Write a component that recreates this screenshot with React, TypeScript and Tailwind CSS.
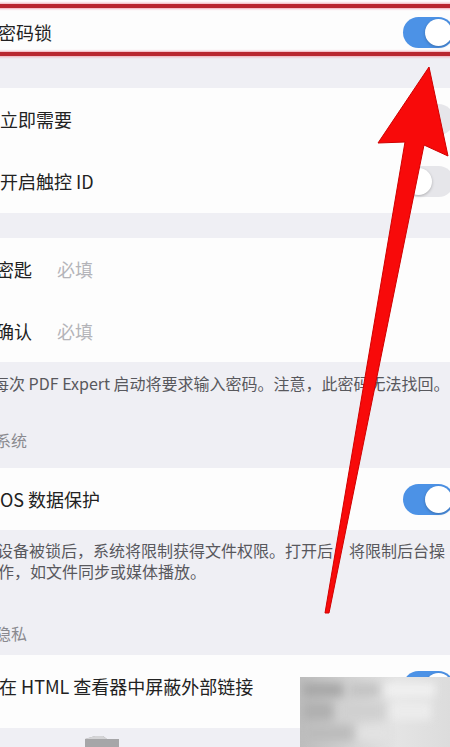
import React from "react";

const Toggle = ({ on }: { on: boolean }) => (
  <div
    className={
      on
        ? "flex h-[31px] w-[51px] shrink-0 items-center justify-end rounded-full bg-[#4c92e6] p-[2px] mr-[-4px]"
        : "flex h-[31px] w-[51px] shrink-0 items-center justify-start rounded-full bg-[#e6e6ea] p-[2px] mr-[-4px]"
    }
  >
    <div className="h-[27px] w-[27px] rounded-full bg-white shadow-[0_1px_3px_rgba(0,0,0,0.25)]" />
  </div>
);

const Row = ({
  children,
  right,
  h = "h-[62px]",
}: {
  children: React.ReactNode;
  right?: React.ReactNode;
  h?: string;
}) => (
  <div className={`flex ${h} items-center justify-between text-[18px] text-[#222]`}>
    <div className="flex items-center whitespace-nowrap">{children}</div>
    {right}
  </div>
);

export default function App() {
  return (
    <div className="relative h-[747px] w-[450px] overflow-hidden bg-[#efeff4] font-['Noto_Sans_CJK_SC','Noto_Sans',sans-serif]">
      {/* 密码锁 */}
      <div className="flex h-[56px] items-center justify-between bg-[#fdfdfd] pt-2 text-[18px] text-[#222]">
        <span className="ml-[-2px]">密码锁</span>
        <Toggle on />
      </div>

      <div className="h-[32px]" />

      <div className="bg-[#fdfdfd]">
        <Row h="h-[62px]" right={<Toggle on={false} />}>
          <span>立即需要</span>
        </Row>
        <Row h="h-[63px]" right={<Toggle on={false} />}>
          <span>开启触控 ID</span>
        </Row>
      </div>

      <div className="h-[25px]" />

      <div className="bg-[#fdfdfd]">
        <Row>
          <span className="ml-[-4px] w-[61px]">密匙</span>
          <span className="text-[#b4b4b9]">必填</span>
        </Row>
        <Row>
          <span className="ml-[-4px] w-[61px]">确认</span>
          <span className="text-[#b4b4b9]">必填</span>
        </Row>
      </div>

      <div className="pt-[10px] pb-[17px] text-[16px] leading-[22px] text-[#58585d] whitespace-nowrap">
        <p className="ml-[-7px]">每次 PDF Expert 启动将要求输入密码。注意，此密码无法找回。</p>
        <p className="ml-[-5px] mt-[35px] text-[#8a8a8f]">系统</p>
      </div>

      <div className="bg-[#fdfdfd]">
        <Row right={<Toggle on />}>
          <span className="ml-[-5px]">iOS 数据保护</span>
        </Row>
      </div>

      <div className="pt-[10px] pb-[11px] text-[16px] leading-[21px] text-[#58585d] whitespace-nowrap">
        <p className="ml-[-3px]">设备被锁后，系统将限制获得文件权限。打开后，将限制后台操</p>
        <p className="ml-[-2px]">作，如文件同步或媒体播放。</p>
        <p className="ml-[-5px] mt-[40px] leading-[22px] text-[#8a8a8f]">隐私</p>
      </div>

      <div className="bg-[#fdfdfd] pb-[11px]">
        <Row right={<Toggle on />}>
          <span className="ml-[-1px]">在 HTML 查看器中屏蔽外部链接</span>
        </Row>
      </div>

      <div className="pl-[83px] pt-[7px]">
        <svg width="38" height="14" viewBox="0 0 38 14">
          <path d="M2 4 L12 1 L20 1 L24 4 L36 4 L36 14 L2 14 Z" fill="#a6a6a8" />
          <path d="M2 4 L12 1 L20 1 L24 4 Z" fill="#d4d4d6" />
        </svg>
      </div>

      {/* annotation: red box */}
      <div className="pointer-events-none absolute left-[-4px] right-[-4px] top-[4px] h-[52px] border-y-[4px] border-[#b92630] shadow-[0_0_2px_1px_rgba(240,150,165,0.8),inset_0_0_2px_1px_rgba(240,150,165,0.8)]" />

      {/* annotation: red arrow */}
      <svg
        className="pointer-events-none absolute left-0 top-0"
        width="450"
        height="747"
        viewBox="0 0 450 747"
      >
        <polygon
          points="429,67 448,156 424,145 329,613 325,613 405,142 378,143"
          fill="#f80a0a"
          stroke="#d00000"
          strokeWidth="1"
          strokeLinejoin="round"
        />
      </svg>

      {/* watermark */}
      <div className="pointer-events-none absolute left-[300px] top-[677px] h-[70px] w-[150px] overflow-hidden bg-[linear-gradient(90deg,#bdbdbd,#d4d4d4_35%,#e4e4e4_65%,#dcdcdc)]">
        <div className="flex h-full flex-col gap-[5px] px-[3px] py-[6px] blur-[4px]">
          <div className="flex gap-[6px]">
            <div className="h-[14px] w-[40px] bg-[#a8a8a8]" />
            <div className="h-[14px] w-[30px] bg-[#c4c4c4]" />
            <div className="h-[14px] w-[50px] bg-[#f0f0f0]" />
          </div>
          <div className="flex gap-[6px]">
            <div className="h-[18px] w-[30px] bg-[#b0b0b0]" />
            <div className="h-[18px] w-[46px] bg-[#d0d0d0]" />
            <div className="h-[18px] w-[40px] bg-[#ececec]" />
          </div>
          <div className="flex gap-[6px]">
            <div className="h-[16px] w-[50px] bg-[#bcbcbc]" />
            <div className="h-[16px] w-[30px] bg-[#e2e2e2]" />
          </div>
        </div>
      </div>
    </div>
  );
}
